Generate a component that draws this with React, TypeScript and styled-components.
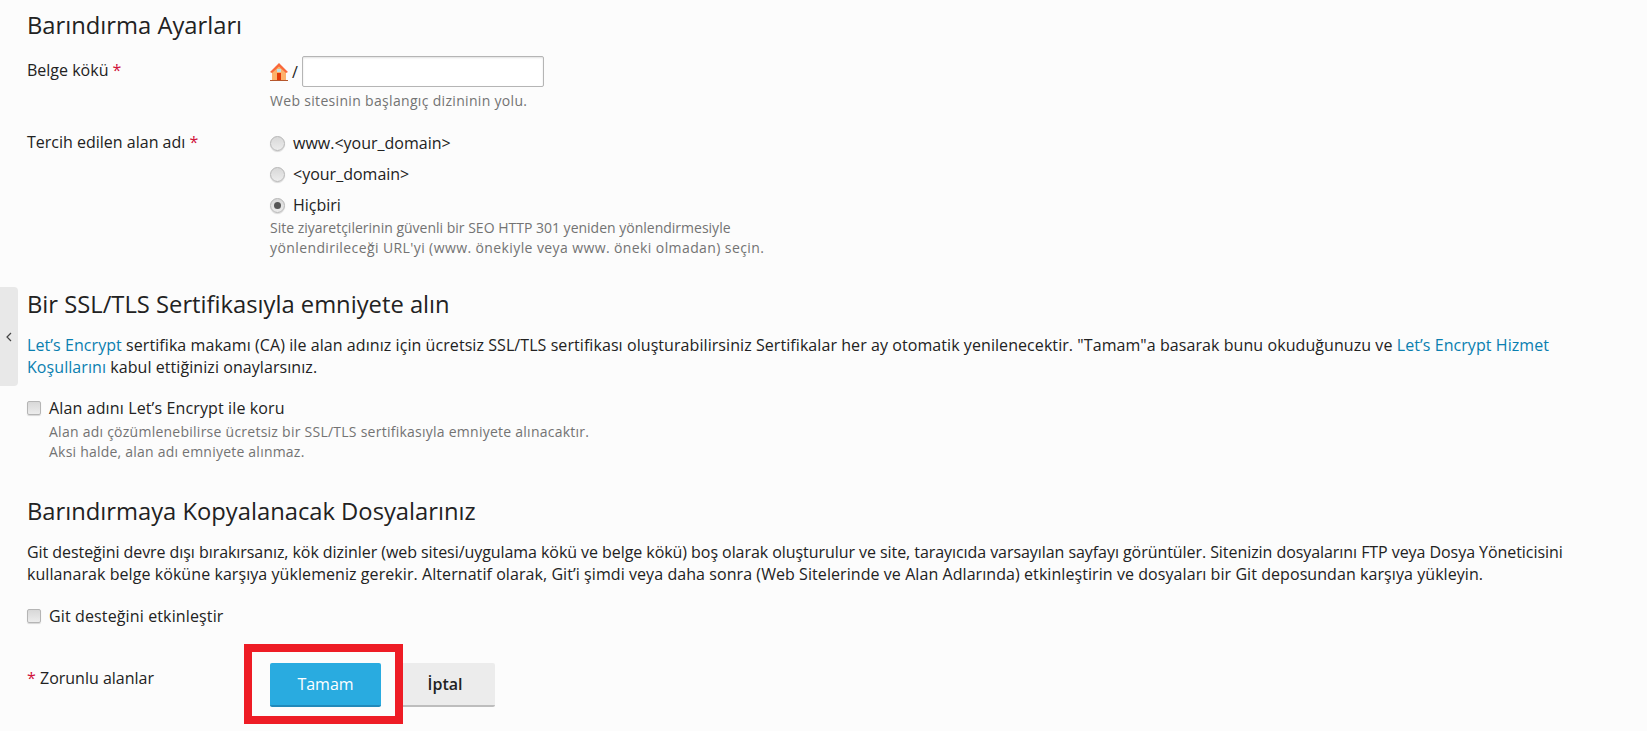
import styled, { createGlobalStyle } from "styled-components";

const GlobalStyle = createGlobalStyle`
  html, body {
    margin: 0;
    padding: 0;
    height: 100%;
    overflow: hidden;
    background: #fcfcfc;
    font-family: "Open Sans", "Liberation Sans", sans-serif;
    font-size: 16px;
    color: #222;
  }
`;

const Page = styled.div`
  position: relative;
  height: 731px;
  padding: 9px 47px 0 27px;
  overflow: hidden;
`;

const SideTab = styled.div`
  position: absolute;
  left: 0;
  top: 287px;
  width: 18px;
  height: 99px;
  background: #e8e8e8;
  border-radius: 0 4px 4px 0;
  display: flex;
  align-items: center;
  justify-content: center;
  color: #444;
`;

const Heading = styled.h2<{ $gap: number }>`
  margin: ${(p) => p.$gap}px 0 0;
  font-size: 23.75px;
  line-height: 32px;
  font-weight: 400;
  color: #222;
`;

const FormRow = styled.div<{ $top: number }>`
  display: grid;
  grid-template-columns: 243px 1fr;
  margin-top: ${(p) => p.$top}px;
`;

const Label = styled.div`
  line-height: 22px;
  padding-top: 3px;
`;

const Required = styled.span`
  color: #d0103a;
`;

const PathLine = styled.div`
  display: flex;
  align-items: center;
  height: 31px;
`;

const Slash = styled.span`
  margin: 0 4px 0 4px;
`;

const TextInput = styled.input`
  box-sizing: border-box;
  width: 242px;
  height: 31px;
  padding: 4px 6px;
  border: 1px solid #b5b5b5;
  border-radius: 2px;
  background: #fff;
  box-shadow: inset 0 1px 2px rgba(0, 0, 0, 0.12);
  outline: none;
`;

const Hint = styled.div<{ $top?: number }>`
  margin-top: ${(p) => p.$top ?? 0}px;
  font-size: 14px;
  line-height: 20px;
  color: #737373;
`;

const RadioList = styled.div`
  display: flex;
  flex-direction: column;
  gap: 11px;
  padding-top: 5px;
`;

const RadioRow = styled.label`
  display: flex;
  align-items: center;
  height: 20px;
  gap: 8px;
`;

const Radio = styled.span<{ $on?: boolean }>`
  box-sizing: border-box;
  width: 15px;
  height: 15px;
  border-radius: 50%;
  border: 1px solid #b5b5b5;
  background: linear-gradient(#d8d8d8, #ececec);
  box-shadow: 0 1px 1px rgba(0, 0, 0, 0.15);
  display: flex;
  align-items: center;
  justify-content: center;
  &::after {
    content: "";
    display: ${(p) => (p.$on ? "block" : "none")};
    width: 7px;
    height: 7px;
    border-radius: 50%;
    background: #555;
  }
`;

const Paragraph = styled.p<{ $top: number }>`
  margin: ${(p) => p.$top}px 0 0;
  line-height: 21.5px;
`;

// Each line keeps the reference's break and its hinted width
const Line = styled.span<{ $spacing: number }>`
  display: block;
  white-space: nowrap;
  letter-spacing: ${(p) => p.$spacing}px;
`;

const Link = styled.a`
  color: #0a7fb0;
  text-decoration: none;
`;

const CheckRow = styled.label<{ $top: number }>`
  display: flex;
  align-items: center;
  gap: 8px;
  height: 20px;
  margin-top: ${(p) => p.$top}px;
  letter-spacing: 0.13px;
`;

const CheckBox = styled.span`
  box-sizing: border-box;
  width: 14px;
  height: 14px;
  border: 1px solid #b5b5b5;
  border-radius: 2px;
  background: linear-gradient(#d8d8d8, #ececec);
  box-shadow: 0 1px 1px rgba(0, 0, 0, 0.15);
`;

const CheckHint = styled(Hint)`
  padding-left: 22px;
`;

const Actions = styled.div`
  display: grid;
  grid-template-columns: 243px auto;
  margin-top: 37px;
`;

const ActionLabel = styled.div`
  line-height: 22px;
  padding-top: 4px;
`;

const Buttons = styled.div`
  display: flex;
  gap: 14px;
`;

const Button = styled.button<{ $primary?: boolean }>`
  height: 44px;
  width: ${(p) => (p.$primary ? 111 : 100)}px;
  border: 0;
  border-bottom: 2px solid ${(p) => (p.$primary ? "#2189ba" : "#bdbdbd")};
  border-radius: 2px;
  background: ${(p) => (p.$primary ? "#29abe0" : "#ececec")};
  color: ${(p) => (p.$primary ? "#fff" : "#222")};
  font-family: inherit;
  font-size: 16px;
  font-weight: ${(p) => (p.$primary ? 500 : 600)};
`;

const RedFrame = styled.div`
  position: absolute;
  left: 244px;
  top: 644px;
  width: 159px;
  height: 80px;
  box-sizing: border-box;
  border: 8px solid #ee1c25;
`;

function HomeIcon() {
  return (
    <svg width="18" height="18" viewBox="0 0 18 18">
      <path d="M2 9V17H16V9L9 2z" fill="#fdb26b" />
      <path d="M0 9 9 0 18 9 16 10 9 3.5 2 10z" fill="#f9683a" />
      <rect x="7" y="10" width="4" height="7" fill="#e33a08" />
      <rect x="7" y="6" width="4" height="3" fill="#bfe0e6" />
      <rect x="0" y="17" width="18" height="1" fill="#b5562c" />
    </svg>
  );
}

function App() {
  return (
    <>
      <GlobalStyle />
      <Page>
        <SideTab>
          <svg width="8" height="12" viewBox="0 0 8 12" fill="none" stroke="currentColor" strokeWidth="1.2">
            <path d="M6 2 2 6l4 4" />
          </svg>
        </SideTab>

        <Heading $gap={0}>Barındırma Ayarları</Heading>

        <FormRow $top={15}>
          <Label>
            Belge kökü <Required>*</Required>
          </Label>
          <div>
            <PathLine>
              <HomeIcon />
              <Slash>/</Slash>
              <TextInput />
            </PathLine>
            <Hint $top={4}>
              <Line $spacing={0.32}>Web sitesinin başlangıç dizininin yolu.</Line>
            </Hint>
          </div>
        </FormRow>

        <FormRow $top={17}>
          <Label>
            Tercih edilen alan adı <Required>*</Required>
          </Label>
          <div>
            <RadioList>
              <RadioRow>
                <Radio />
                www.&lt;your_domain&gt;
              </RadioRow>
              <RadioRow>
                <Radio />
                &lt;your_domain&gt;
              </RadioRow>
              <RadioRow>
                <Radio $on />
                Hiçbiri
              </RadioRow>
            </RadioList>
            <Hint $top={3}>
              <Line $spacing={0}>Site ziyaretçilerinin güvenli bir SEO HTTP 301 yeniden yönlendirmesiyle</Line>
              <Line $spacing={0.4}>yönlendirileceği URL'yi (www. önekiyle veya www. öneki olmadan) seçin.</Line>
            </Hint>
          </div>
        </FormRow>

        <Heading $gap={30}>Bir SSL/TLS Sertifikasıyla emniyete alın</Heading>
        <Paragraph $top={15}>
          <Line $spacing={0.07}>
            <Link>Let’s Encrypt</Link> sertifika makamı (CA) ile alan adınız için ücretsiz SSL/TLS sertifikası
            oluşturabilirsiniz Sertifikalar her ay otomatik yenilenecektir. "Tamam"a basarak bunu okuduğunuzu ve{" "}
            <Link>Let’s Encrypt Hizmet</Link>
          </Line>
          <Line $spacing={0.07}>
            <Link>Koşullarını</Link> kabul ettiğinizi onaylarsınız.
          </Line>
        </Paragraph>
        <CheckRow $top={20}>
          <CheckBox />
          Alan adını Let’s Encrypt ile koru
        </CheckRow>
        <CheckHint $top={4}>
          <Line $spacing={0.25}>Alan adı çözümlenebilirse ücretsiz bir SSL/TLS sertifikasıyla emniyete alınacaktır.</Line>
          <Line $spacing={0.22}>Aksi halde, alan adı emniyete alınmaz.</Line>
        </CheckHint>

        <Heading $gap={33}>Barındırmaya Kopyalanacak Dosyalarınız</Heading>
        <Paragraph $top={15}>
          <Line $spacing={-0.06}>
            Git desteğini devre dışı bırakırsanız, kök dizinler (web sitesi/uygulama kökü ve belge kökü) boş olarak
            oluşturulur ve site, tarayıcıda varsayılan sayfayı görüntüler. Sitenizin dosyalarını FTP veya Dosya
            Yöneticisini
          </Line>
          <Line $spacing={0.07}>
            kullanarak belge köküne karşıya yüklemeniz gerekir. Alternatif olarak, Git’i şimdi veya daha sonra (Web
            Sitelerinde ve Alan Adlarında) etkinleştirin ve dosyaları bir Git deposundan karşıya yükleyin.
          </Line>
        </Paragraph>
        <CheckRow $top={21}>
          <CheckBox />
          Git desteğini etkinleştir
        </CheckRow>

        <Actions>
          <ActionLabel>
            <Required>*</Required> Zorunlu alanlar
          </ActionLabel>
          <Buttons>
            <Button $primary>Tamam</Button>
            <Button>İptal</Button>
          </Buttons>
        </Actions>

        <RedFrame />
      </Page>
    </>
  );
}

export default App;
